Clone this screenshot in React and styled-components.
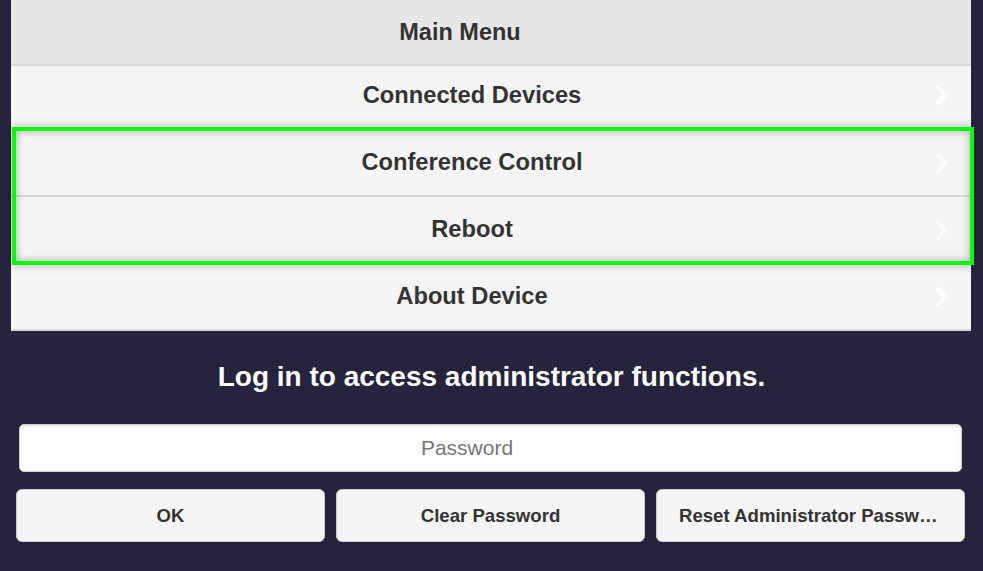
import React from "react";
import styled, { createGlobalStyle } from "styled-components";

const GlobalStyle = createGlobalStyle`
  html, body {
    margin: 0;
    padding: 0;
    background: #26233d;
    font-family: "Liberation Sans", Arial, sans-serif;
  }
`;

const Page = styled.div`
  width: 983px;
  height: 571px;
  overflow: hidden;
  background: #26233d;
`;

// Menu panel
const MenuPanel = styled.div`
  position: relative;
  margin: 0 12px 0 11px;
  display: flex;
  flex-direction: column;
`;

const MenuHeader = styled.div`
  height: 64px;
  display: flex;
  align-items: center;
  justify-content: center;
  padding-right: 62px;
  background: #e7e7e7;
  border-bottom: 2px solid #d9d9d9;
  color: #333;
  font-weight: bold;
  font-size: 23.5px;
`;

const MenuRow = styled.div`
  box-sizing: border-box;
  height: ${(p) => p.$height}px;
  display: flex;
  align-items: center;
  padding: 0 23px ${(p) => p.$lift || 0}px 0;
  background: #f5f5f5;
  border-bottom: 2px solid #d9d9d9;
`;

const RowLabel = styled.span`
  flex: 1;
  text-align: center;
  color: #333;
  font-weight: bold;
  font-size: 23.7px;
`;

const Chevron = styled.svg`
  width: 13px;
  height: 22px;
  margin-left: 2px;
  flex-shrink: 0;
`;

// green highlight drawn over two rows
const Highlight = styled.div`
  position: absolute;
  left: 1px;
  top: 127px;
  width: 962px;
  height: 138px;
  box-sizing: border-box;
  border: 4px solid #00ff00;
  box-shadow: 0 0 9px rgba(0, 0, 0, 0.28), inset 0 0 9px rgba(0, 0, 0, 0.3);
  pointer-events: none;
`;

// Login area
const LoginSection = styled.div`
  display: flex;
  flex-direction: column;
  padding-top: 30px;
`;

const LoginTitle = styled.div`
  height: 32px;
  line-height: 32px;
  text-align: center;
  color: #fff;
  font-weight: bold;
  font-size: 28px;
`;

const PasswordInput = styled.input`
  box-sizing: border-box;
  margin: 31px 21px 0 19px;
  height: 48px;
  padding: 0 47px 0 0;
  border: 1px solid #cfcfcf;
  border-radius: 5px;
  background: #fff;
  box-shadow: inset 0 1px 3px rgba(0, 0, 0, 0.15);
  text-align: center;
  font-family: "Liberation Sans", Arial, sans-serif;
  font-size: 21px;
  color: #333;
  outline: none;

  &::placeholder {
    color: #777;
  }
`;

const ButtonRow = styled.div`
  display: grid;
  grid-template-columns: repeat(3, 309px);
  gap: 11px;
  margin: 17px 0 0 16px;
`;

const ActionButton = styled.button`
  box-sizing: border-box;
  height: 53px;
  padding: 0 22px;
  border: 1px solid #cbcbcb;
  border-radius: 6px;
  background: #f5f5f5;
  box-shadow: 0 1px 2px rgba(0, 0, 0, 0.15);
  color: #333;
  font-family: "Liberation Sans", Arial, sans-serif;
  font-weight: bold;
  font-size: 18.6px;
  white-space: nowrap;
  overflow: hidden;
  text-overflow: ellipsis;
`;

// heights include the 2px bottom border
const menuItems = [
  { label: "Connected Devices", height: 64, lift: 4 },
  { label: "Conference Control", height: 67 },
  { label: "Reboot", height: 67 },
  { label: "About Device", height: 67 },
];

const ChevronIcon = () => (
  <Chevron viewBox="0 0 13 22">
    <polyline
      points="2,2 10.5,11 2,20"
      fill="none"
      stroke="#ffffff"
      strokeWidth="3.8"
    />
  </Chevron>
);

const App = () => {
  return (
    <Page>
      <GlobalStyle />
      <MenuPanel>
        <MenuHeader>Main Menu</MenuHeader>
        {menuItems.map((item) => (
          <MenuRow key={item.label} $height={item.height} $lift={item.lift}>
            <RowLabel>{item.label}</RowLabel>
            <ChevronIcon />
          </MenuRow>
        ))}
        <Highlight />
      </MenuPanel>

      <LoginSection>
        <LoginTitle>Log in to access administrator functions.</LoginTitle>
        <PasswordInput type="password" placeholder="Password" />
        <ButtonRow>
          <ActionButton>OK</ActionButton>
          <ActionButton>Clear Password</ActionButton>
          <ActionButton>Reset Administrator Password</ActionButton>
        </ButtonRow>
      </LoginSection>
    </Page>
  );
};

export default App;
